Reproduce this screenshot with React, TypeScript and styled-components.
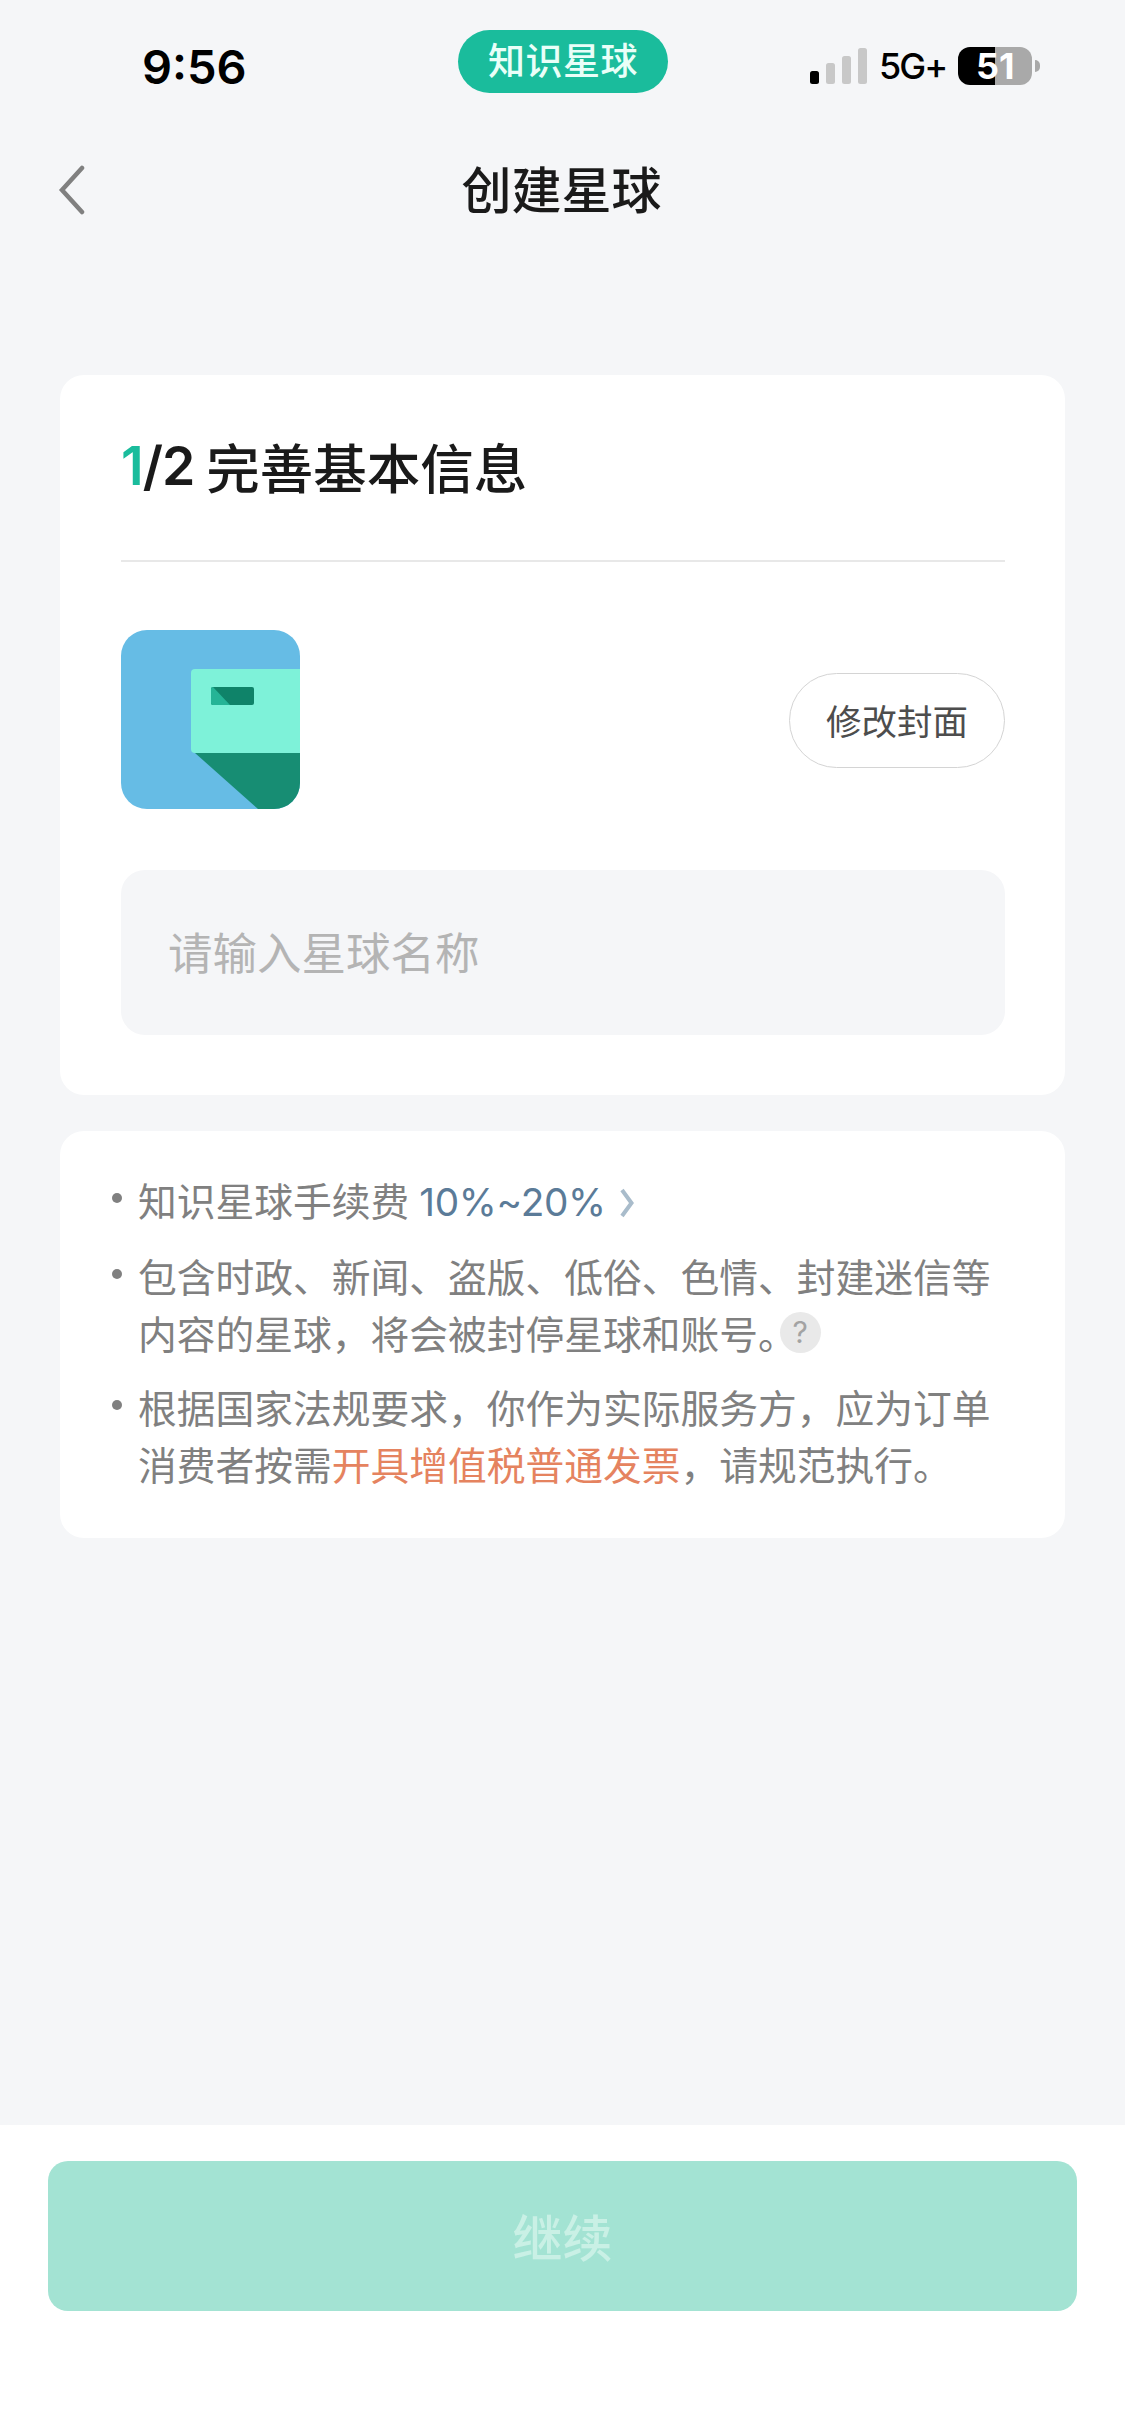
import styled, { createGlobalStyle } from "styled-components";

const GlobalStyle = createGlobalStyle`
  html, body {
    margin: 0;
    padding: 0;
    background: #f5f6f8;
  }
  * {
    box-sizing: border-box;
  }
`;

const Page = styled.main`
  width: 1125px;
  height: 2436px;
  display: flex;
  flex-direction: column;
  background: #f5f6f8;
  font-family: "Noto Sans CJK SC", "Noto Sans", sans-serif;
  overflow: hidden;
`;

const StatusBar = styled.header`
  height: 115px;
  padding-top: 30px;
  display: grid;
  grid-template-columns: 458px 210px 1fr;
  align-items: start;
`;

const Time = styled.div`
  padding: 12px 0 0 142px;
  font-family: "Inter", "Liberation Sans", sans-serif;
  font-size: 47px;
  line-height: 50px;
  font-weight: 600;
  color: #000;
`;

const AppPill = styled.div`
  height: 63px;
  border-radius: 32px;
  background: #1abc9c;
  color: #e9fff8;
  font-size: 37px;
  line-height: 59px;
  font-weight: 500;
  letter-spacing: 0.5px;
  text-align: center;
`;

const StatusRight = styled.div`
  padding: 17px 0 0 142px;
  display: flex;
  align-items: center;
  height: 55px;
`;

const NetworkLabel = styled.span`
  margin-left: 12px;
  font-family: "Inter", "Liberation Sans", sans-serif;
  font-size: 36px;
  line-height: 38px;
  font-weight: 500;
  letter-spacing: -2px;
  color: #000;
`;

const Battery = styled.div`
  position: relative;
  margin-left: 12px;
  width: 74px;
  height: 38px;
  border-radius: 12px;
  background: linear-gradient(90deg, #000 0 37px, #a9a9a9 37px);
  color: #fff;
  font-family: "Inter", "Liberation Sans", sans-serif;
  font-size: 36px;
  line-height: 38px;
  font-weight: 700;
  text-align: center;

  &::after {
    content: "";
    position: absolute;
    left: 77px;
    top: 13px;
    width: 5px;
    height: 12px;
    border-radius: 0 6px 6px 0;
    background: #a9a9a9;
  }
`;

const NavBar = styled.nav`
  height: 150px;
  display: grid;
  grid-template-columns: 1fr auto 1fr;
  align-items: center;
`;

const BackButton = styled.div`
  padding-left: 58px;
  display: flex;
  align-items: center;
`;

const NavTitle = styled.h1`
  margin: 0 2px 7px 0;
  font-size: 50px;
  line-height: 60px;
  font-weight: 500;
  color: #1a1a1a;
`;

const Content = styled.section`
  margin-top: 110px;
  padding: 0 60px;
  display: flex;
  flex-direction: column;
  gap: 36px;
`;

const Card = styled.div`
  background: #fff;
  border-radius: 24px;
`;

const FormCard = styled(Card)`
  height: 720px;
  padding: 0 60px 60px 61px;
`;

const StepHeader = styled.div`
  height: 187px;
  padding-bottom: 5px;
  display: flex;
  align-items: center;
  border-bottom: 2px solid #e8e8e8;
  font-size: 53.5px;
  font-weight: 500;
  color: #1a1a1a;
`;

const StepNumber = styled.span`
  font-family: "Inter", "Liberation Sans", sans-serif;
  font-weight: 600;
  letter-spacing: -1px;
  color: ${(props) => props.color || "#1a1a1a"};
`;

const StepTitle = styled.span`
  margin-left: 12px;
`;

const CoverRow = styled.div`
  margin-top: 68px;
  height: 179px;
  display: flex;
  align-items: center;
  justify-content: space-between;
`;

const CoverButton = styled.div`
  width: 216px;
  height: 95px;
  margin-top: 2px;
  padding-bottom: 2px;
  border: 1.5px solid #d4d4d4;
  border-radius: 48px;
  display: flex;
  align-items: center;
  justify-content: center;
  font-size: 35.5px;
  color: #4d4d4d;
`;

const NameInput = styled.div`
  margin-top: 61px;
  height: 165px;
  padding: 0 0 5px 47px;
  display: flex;
  align-items: center;
  border-radius: 24px;
  background: #f5f6f8;
  font-size: 44.5px;
  color: #b4b4b4;
`;

const InfoCard = styled(Card)`
  height: 407px;
  padding: 40px 60px 0 52px;
  display: flex;
  flex-direction: column;
  gap: 16px;
`;

const InfoItem = styled.div`
  display: flex;
  align-items: flex-start;
  gap: 16px;
  font-size: 38.75px;
  line-height: 57.5px;
  color: #808080;
`;

const Bullet = styled.i`
  flex: none;
  width: 10px;
  height: 10px;
  margin-top: 22px;
  border-radius: 50%;
  background: #808080;
`;

const RateLink = styled.span`
  color: #5b7b98;
  font-family: "Inter", "Noto Sans", sans-serif;
  letter-spacing: -0.3px;
  margin-left: 10px;
`;

const Chevron = styled.svg`
  margin-left: 14px;
  vertical-align: -2px;
`;

const HelpBadge = styled.span`
  display: inline-flex;
  align-items: center;
  justify-content: center;
  width: 41px;
  height: 41px;
  margin: 8px 0 0 -17px;
  border-radius: 50%;
  background: #e9e9e9;
  color: #a3a3a3;
  font-family: "Inter", "Noto Sans", sans-serif;
  font-size: 30px;
  line-height: 41px;
  vertical-align: top;
`;

const Highlight = styled.span`
  color: #e5835f;
`;

const Footer = styled.footer`
  margin-top: auto;
  height: 311px;
  padding: 36px 48px 0;
  background: #fff;
`;

const ContinueButton = styled.div`
  height: 150px;
  padding-bottom: 2px;
  border-radius: 20px;
  background: #a3e3d3;
  color: #c9f0e5;
  display: flex;
  align-items: center;
  justify-content: center;
  font-size: 50px;
  font-weight: 500;
`;

const SignalIcon = () => (
  <svg width="57" height="36" viewBox="0 0 57 36">
    <rect x="0" y="23" width="9" height="13" rx="2.5" fill="#000" />
    <rect x="16" y="15" width="9" height="21" rx="2.5" fill="#c8c8c8" />
    <rect x="32" y="8" width="9" height="28" rx="2.5" fill="#c8c8c8" />
    <rect x="48" y="0" width="9" height="36" rx="2.5" fill="#c8c8c8" />
  </svg>
);

const BackIcon = () => (
  <svg width="28" height="50" viewBox="0 0 28 50">
    <path
      d="M24 3 L4 25 L24 47"
      fill="none"
      stroke="#808080"
      strokeWidth="4.5"
      strokeLinecap="round"
      strokeLinejoin="miter"
    />
  </svg>
);

const CoverIcon = () => (
  <svg width="179" height="179" viewBox="0 0 179 179">
    <defs>
      <clipPath id="cover-clip">
        <rect width="179" height="179" rx="26" />
      </clipPath>
    </defs>
    <g clipPath="url(#cover-clip)">
      <rect width="179" height="179" fill="#66bce5" />
      <path d="M74 123 H179 V179 H137 Z" fill="#178d73" />
      <path
        d="M74 39 H179 V123 H74 Q70 123 70 119 V43 Q70 39 74 39 Z"
        fill="#7ef2d9"
      />
      <rect x="90" y="57" width="43" height="18" rx="2" fill="#0f8369" />
      <path d="M90 59 Q90 57 92 57 L109 75 H92 Q90 75 90 73 Z" fill="#25b496" />
    </g>
  </svg>
);

const App = () => {
  return (
    <Page>
      <GlobalStyle />
      <StatusBar>
        <Time>9:56</Time>
        <AppPill>知识星球</AppPill>
        <StatusRight>
          <SignalIcon />
          <NetworkLabel>5G+</NetworkLabel>
          <Battery>51</Battery>
        </StatusRight>
      </StatusBar>
      <NavBar>
        <BackButton>
          <BackIcon />
        </BackButton>
        <NavTitle>创建星球</NavTitle>
      </NavBar>
      <Content>
        <FormCard>
          <StepHeader>
            <StepNumber color="#1abc9c">1</StepNumber>
            <StepNumber>/2</StepNumber>
            <StepTitle>完善基本信息</StepTitle>
          </StepHeader>
          <CoverRow>
            <CoverIcon />
            <CoverButton>修改封面</CoverButton>
          </CoverRow>
          <NameInput>请输入星球名称</NameInput>
        </FormCard>
        <InfoCard>
          <InfoItem>
            <Bullet />
            <div>
              知识星球手续费
              <RateLink>10%~20%</RateLink>
              <Chevron width="14" height="30" viewBox="0 0 14 30">
                <path
                  d="M2 2 L11.5 15 L2 28"
                  fill="none"
                  stroke="#a9bccb"
                  strokeWidth="4"
                />
              </Chevron>
            </div>
          </InfoItem>
          <InfoItem>
            <Bullet />
            <div>
              包含时政、新闻、盗版、低俗、色情、封建迷信等内容的星球，将会被封停星球和账号。
              <HelpBadge>?</HelpBadge>
            </div>
          </InfoItem>
          <InfoItem>
            <Bullet />
            <div>
              根据国家法规要求，你作为实际服务方，应为订单消费者按需
              <Highlight>开具增值税普通发票</Highlight>，请规范执行。
            </div>
          </InfoItem>
        </InfoCard>
      </Content>
      <Footer>
        <ContinueButton>继续</ContinueButton>
      </Footer>
    </Page>
  );
};

export default App;
